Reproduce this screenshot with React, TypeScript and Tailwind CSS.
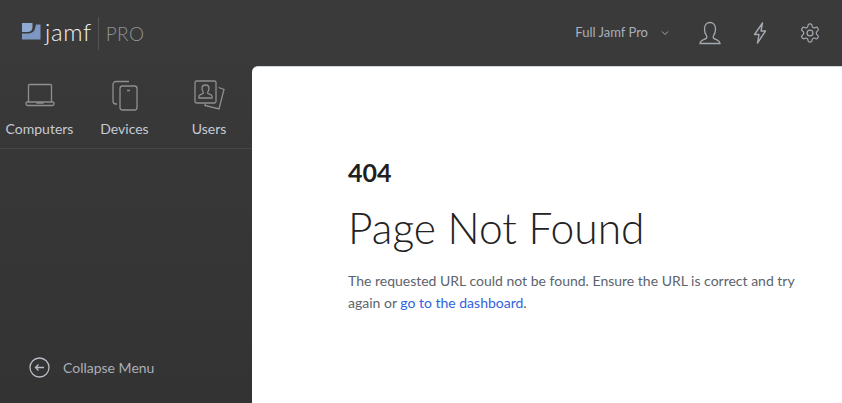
const F = { fontFamily: '"Lato", "Open Sans", sans-serif' };

function Logo() {
  return (
    <div className="flex items-center">
      <svg width="19" height="17" viewBox="0 0 19 17" className="mt-[-3px]">
        <path d="M0 0H10.500V4Q10.500 8.500 6 9H0Z" fill="#8fa9d1" />
        <path d="M0 10.500H6.500Q12 10 13 5.500L14 1.500H18.500V16.500H0Z" fill="#7d97c2" />
      </svg>
      <span className="ml-[4px] text-[24px] leading-none text-[#eef0f2] font-light mt-[-3px] tracking-[0.6px]">jamf</span>
      <div className="ml-[6px] w-px h-[33px] bg-[#555]" />
      <span className="ml-[7px] text-[19px] leading-none text-[#8f9296] font-light tracking-[0.4px]">PRO</span>
    </div>
  );
}

function Nav({ label, w, children }: { label: string; w: string; children: React.ReactNode }) {
  return (
    <div className={`flex flex-col items-center pt-[9px] ${w}`}>
      <div className="h-[40px] flex items-center justify-center">{children}</div>
      <span className="mt-[5px] text-[14px] leading-[17px] text-[#c4cbd6]">{label}</span>
    </div>
  );
}

export default function App() {
  return (
    <div className="w-[842px] h-[403px] overflow-hidden flex flex-col bg-[#393939]" style={F}>
      <header className="h-[66px] shrink-0 flex items-center pl-[22px] pr-[21px] bg-[#3a3a3a]">
        <Logo />
        <div className="ml-auto flex items-center">
          <span className="text-[13px] text-[#a9afb8]">Full Jamf Pro</span>
          <svg width="8" height="6" viewBox="0 0 8 6" className="ml-[13px]" fill="none" stroke="#a0a6ae" strokeWidth="1"><path d="M1 1.500l3 3 3-3" /></svg>
          <svg width="22" height="24" viewBox="0 0 22 24" className="ml-[30px]" fill="none" stroke="#a3a9b1" strokeWidth="1.300"><path d="M1 22.500c0-3.500 5.500-4 6.600-5.500.5-1 .3-2-.4-3C6 12.500 5.500 10 5.500 8c0-4 2.500-6.500 5.500-6.500S16.500 4 16.500 8c0 2-.5 4.500-1.700 6-.7 1-.9 2-.4 3 1.100 1.500 6.600 2 6.600 5.500Z" /></svg>
          <svg width="14" height="22" viewBox="0 0 14 22" className="ml-[32px]" fill="none" stroke="#a3a9b1" strokeWidth="1.400"><path d="M9.500 1 1.500 12.500H6L4.500 21 12.500 9H8Z" strokeLinejoin="round" /></svg>
          <svg width="22" height="22" viewBox="0 0 24 24" className="ml-[32px]" fill="none" stroke="#a3a9b1" strokeWidth="1.300"><path d="M12.220 2h-.44a2 2 0 0 0-2 2v.18a2 2 0 0 1-1 1.730l-.43.250a2 2 0 0 1-2 0l-.15-.08a2 2 0 0 0-2.730.730l-.22.380a2 2 0 0 0 .730 2.730l.15.100a2 2 0 0 1 1 1.720v.510a2 2 0 0 1-1 1.740l-.15.090a2 2 0 0 0-.730 2.730l.22.380a2 2 0 0 0 2.730.730l.15-.08a2 2 0 0 1 2 0l.43.250a2 2 0 0 1 1 1.730V20a2 2 0 0 0 2 2h.44a2 2 0 0 0 2-2v-.18a2 2 0 0 1 1-1.730l.43-.250a2 2 0 0 1 2 0l.15.080a2 2 0 0 0 2.730-.730l.22-.390a2 2 0 0 0-.730-2.730l-.15-.080a2 2 0 0 1-1-1.740v-.500a2 2 0 0 1 1-1.740l.15-.090a2 2 0 0 0 .730-2.730l-.22-.380a2 2 0 0 0-2.730-.730l-.15.080a2 2 0 0 1-2 0l-.43-.250a2 2 0 0 1-1-1.730V4a2 2 0 0 0-2-2z" /><circle cx="12" cy="12" r="3.200" /></svg>
        </div>
      </header>
      <div className="flex-1 min-h-0 flex">
        <aside className="w-[252px] shrink-0 flex flex-col bg-gradient-to-b from-[#393939] to-[#333333]">
          <div className="h-[83px] flex border-b border-[#464646]">
            <Nav label="Computers" w="w-[79px]">
              <svg width="30" height="24" viewBox="0 0 30 24" fill="none" stroke="#8f8f8f" strokeWidth="1.300"><path d="M3.500 19V2.500a1 1 0 0 1 1-1h21a1 1 0 0 1 1 1V19" /><rect x="1" y="19" width="28" height="3.500" rx="1.500" /><path d="M12 19v1h6v-1" /></svg>
            </Nav>
            <Nav label="Devices" w="w-[91px]">
              <svg width="26" height="31" viewBox="0 0 26 31" fill="none" stroke="#8f8f8f" strokeWidth="1.300"><path d="M17 1.500H4a3 3 0 0 0-3 3V21a3 3 0 0 0 3 3h1" /><rect x="8" y="6" width="17" height="24" rx="2.500" /><path d="M15 10.500h3M16.500 25.500h.01" /></svg>
            </Nav>
            <Nav label="Users" w="w-[78px]">
              <svg width="31" height="31" viewBox="0 0 31 31" fill="none" stroke="#8f8f8f" strokeWidth="1.300"><rect x="1" y="1" width="21" height="22" rx="1.500" /><path d="M5 18v-2c0-1.500 4-2 4.500-3 .3-.8-1.500-2-1.500-4.500C8 6 9.500 5 11.500 5S15 6 15 8.500c0 2.500-1.800 3.700-1.500 4.500.5 1 4.500 1.500 4.500 3v2Z" /><path d="M24.500 7.500l5.500 2-5 19.500-14-3.500.5-1.500" /></svg>
            </Nav>
          </div>
          <div className="mt-auto mb-[25px] ml-[29px] flex items-center">
            <svg width="21" height="21" viewBox="0 0 21 21" fill="none" stroke="#b7bcc4" strokeWidth="1.300"><circle cx="10.500" cy="10.500" r="9.500" /><path d="M15 10.500H6.500M9.500 7.500l-3 3 3 3" /></svg>
            <span className="ml-[13px] text-[14px] leading-[20px] text-[#a9afb8]">Collapse Menu</span>
          </div>
        </aside>
        <main className="flex-1 bg-white rounded-tl-[6px] pl-[96px] pr-[40px] pt-[91px] border-t border-[#cfd8dc]">
          <div className="text-[25px] leading-[28px] font-bold text-[#1f1f1f]">404</div>
          <h1 className="mt-[17px] text-[42.5px] leading-[50px] font-light text-[#222]">Page Not Found</h1>
          <p className="mt-[17px] w-[460px] text-[14px] leading-[22px] text-[#5c636d]">
            The requested URL could not be found. Ensure the URL is correct and try again or <a className="text-[#2f62e0]">go to the dashboard</a>.
          </p>
        </main>
      </div>
    </div>
  );
}
